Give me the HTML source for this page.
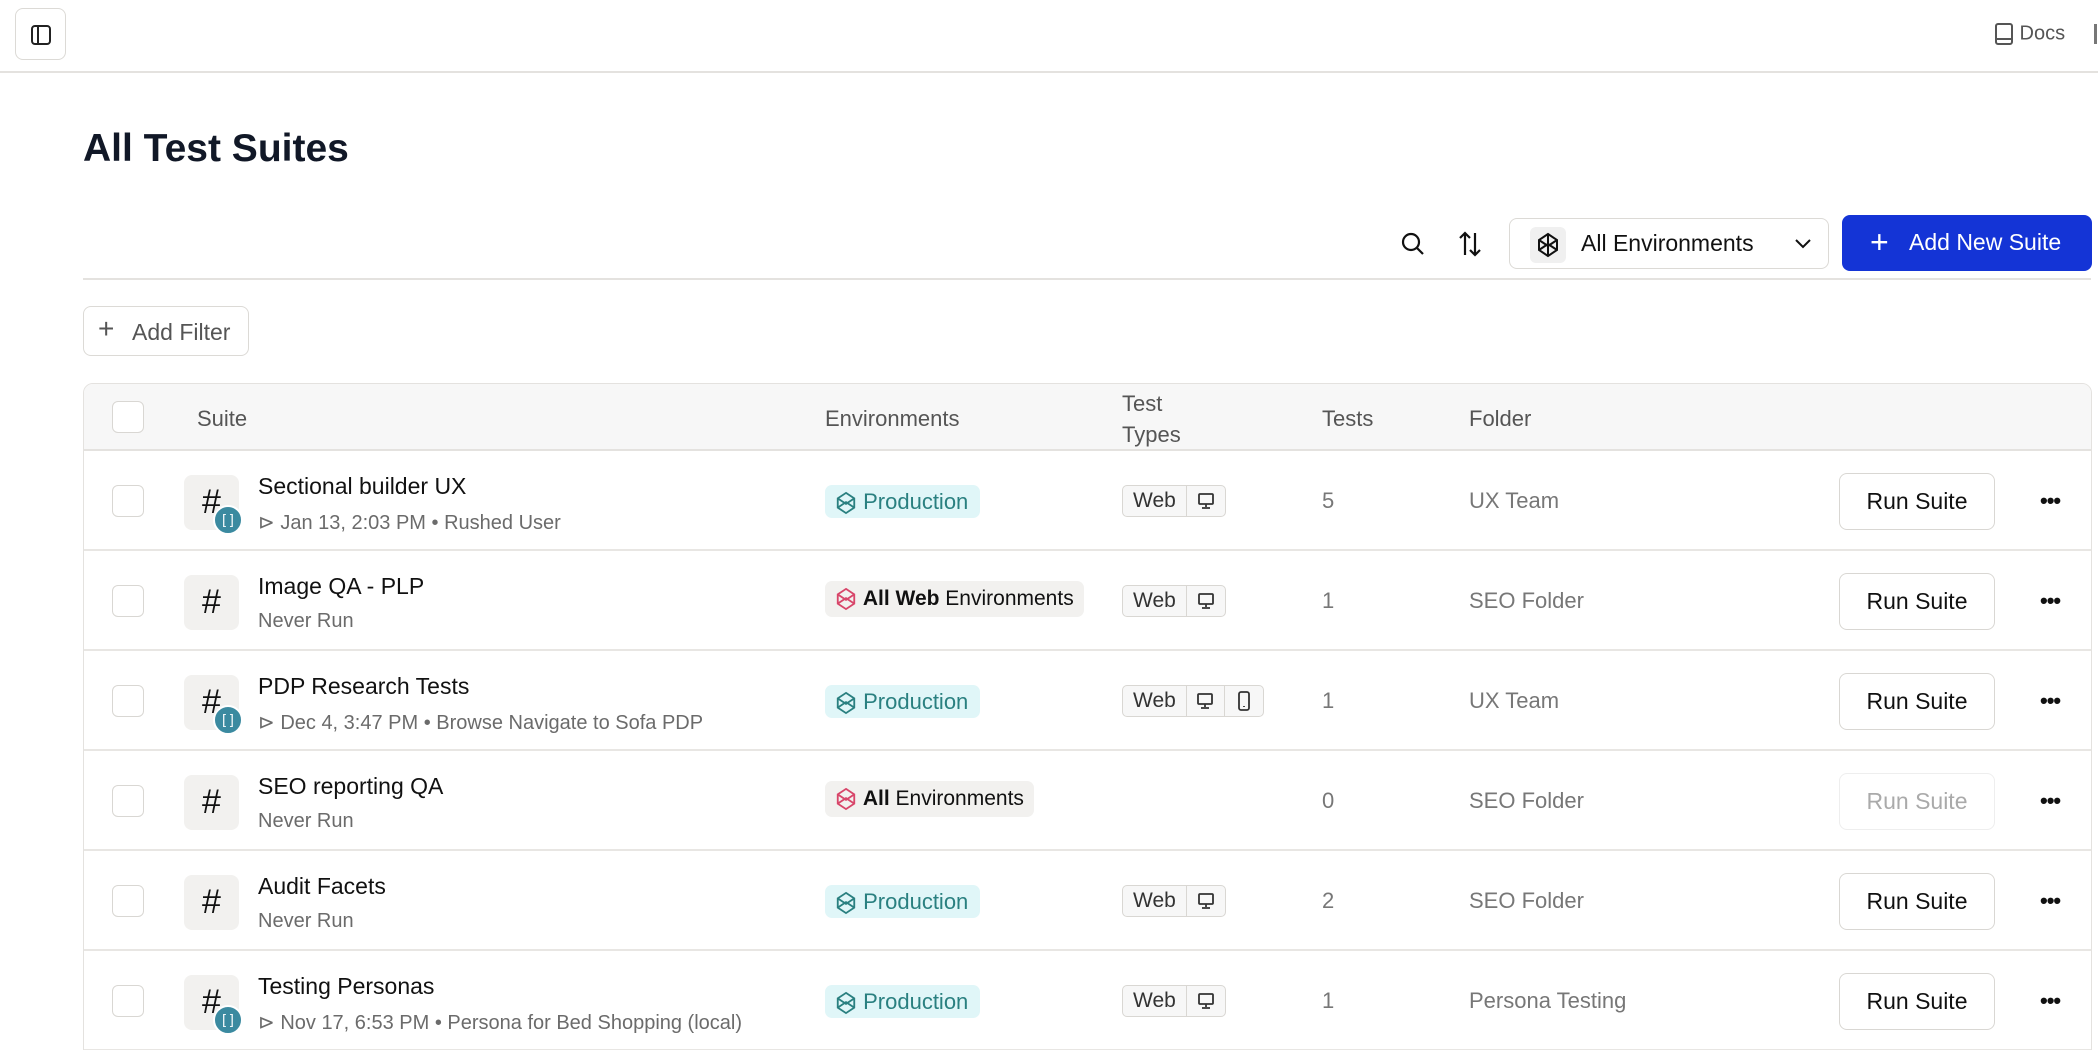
<!DOCTYPE html>
<html><head><meta charset="utf-8">
<style>
*{box-sizing:border-box;margin:0;padding:0}
html,body{width:2098px;height:1050px;overflow:hidden}
body{background:#fff;font-family:"Liberation Sans",sans-serif;color:#111}
#w{position:relative;width:2098px;height:1050px;overflow:hidden}
.a{position:absolute}
.topbar{left:0;top:0;width:2098px;height:73px;border-bottom:2px solid #e4e2df}
.tog{left:15px;top:8px;width:51px;height:52px;border:1.5px solid #dcdad6;border-radius:8px}
.title{left:83px;top:127px;font-size:39px;font-weight:bold;color:#111827}
.line{left:83px;top:278px;width:2008px;height:2px;background:#e4e2df}
.env{left:1509px;top:218px;width:320px;height:51px;border:1.5px solid #dcdad6;border-radius:8px}
.add{left:1842px;top:215px;width:250px;height:56px;background:#1434d6;border-radius:8px;color:#fff;font-size:23px}
.filter{left:83px;top:306px;width:166px;height:50px;border:1.5px solid #dcdad6;border-radius:8px;font-size:23px;color:#555}
.table{left:83px;top:383px;width:2009px;height:700px;border:1.5px solid #e4e2df;border-radius:10px;overflow:hidden}
.head{left:0;top:0;width:100%;height:67px;background:#f7f7f7;border-bottom:2px solid #e4e2df}
.ht{font-size:22px;color:#555}
.cb{width:32px;height:32px;border:1.5px solid #d9d7d3;border-radius:6px;background:#fff}
.row{left:0;width:100%;height:100px;border-bottom:2px solid #e8e6e3}
.ic{left:100px;top:24px;width:55px;height:55px;background:#f2f1ef;border-radius:8px;font-size:34px;text-align:center;line-height:55px;color:#111}
.bd{left:129px;top:54px;width:30px;height:30px;border-radius:50%;background:#3b8aa0;border:2px solid #fff;color:#fff;font-size:14px;text-align:center;line-height:25px}
.nm{left:174px;top:22px;font-size:23px;color:#111}
.sub{left:174px;top:59px;font-size:20px;color:#6b6b6b;white-space:nowrap}
.prod{left:741px;top:34px;height:33px;padding:0 12px 0 10px;background:#e0f6f8;border-radius:7px;font-size:22px;color:#2a8080;line-height:33px;white-space:nowrap}
.allenv{left:741px;top:30px;height:36px;padding:0 10px;background:#f2f1ef;border-radius:7px;font-size:21px;color:#111;line-height:36px;white-space:nowrap}
.tt{left:1038px;top:34px;height:32px;border:1.5px solid #d9d7d3;border-radius:5px;background:#f7f7f7;display:flex;font-size:21px;color:#333}
.tt span{padding:0 10px;line-height:29px;border-right:1.5px solid #d9d7d3}
.tt i{width:38px;display:flex;align-items:center;justify-content:center;border-right:1.5px solid #d9d7d3}
.tt i:last-child{border-right:none}
.num{left:1238px;top:37px;font-size:22px;color:#777}
.fold{left:1385px;top:37px;font-size:22px;color:#777}
.run{left:1755px;top:22px;width:156px;height:57px;border:1.5px solid #d9d7d3;border-radius:8px;font-size:23px;text-align:center;line-height:55px;color:#111}
.dots{left:1956px;top:37px;font-size:22px;font-weight:bold;letter-spacing:-1px;color:#111}
svg{display:inline-block;vertical-align:middle}
</style></head><body><div id="w">
<div class="a topbar"></div>
<div class="a tog"><svg class="a" style="left:14px;top:15px" width="22" height="22" viewBox="0 0 22 22" fill="none" stroke="#222" stroke-width="2"><rect x="2" y="2" width="18" height="18" rx="3"/><line x1="8" y1="2" x2="8" y2="20"/></svg></div>
<div class="a" style="left:1994px;top:22px;font-size:20px;color:#555"><svg width="20" height="24" viewBox="0 0 20 24" fill="none" stroke="#555" stroke-width="2"><rect x="2" y="2" width="16" height="20" rx="2"/><line x1="2" y1="17" x2="18" y2="17"/></svg> Docs</div>
<div class="a" style="left:2094px;top:24px;width:3px;height:20px;background:#777"></div>
<div class="a title">All Test Suites</div>

<svg class="a" style="left:1400px;top:231px" width="26" height="26" viewBox="0 0 26 26" fill="none" stroke="#111" stroke-width="2.2"><circle cx="11" cy="11" r="8"/><line x1="17" y1="17" x2="23" y2="23"/></svg>
<svg class="a" style="left:1457px;top:230px" width="26" height="28" viewBox="0 0 26 28" fill="none" stroke="#111" stroke-width="2.2"><path d="M8 25V3M3 8l5-5 5 5M18 3v22M13 20l5 5 5-5"/></svg>
<div class="a env">
 <div class="a" style="left:20px;top:8px;width:36px;height:36px;background:#f0f0f0;border-radius:6px"></div>
 <svg class="a" style="left:26px;top:13px" width="24" height="26" viewBox="0 0 24 26" fill="none" stroke="#111" stroke-width="2"><path d="M12 2l9 6v10l-9 6-9-6V8z M3 8l9 6 9-6 M3 18l9-6 9 6 M12 2v22"/></svg>
 <div class="a" style="left:71px;top:11px;font-size:23px;color:#111">All Environments</div>
 <svg class="a" style="left:284px;top:19px" width="18" height="12" viewBox="0 0 18 12" fill="none" stroke="#111" stroke-width="2"><path d="M2 2l7 7 7-7"/></svg>
</div>
<div class="a add"><span class="a" style="left:28px;top:9px;font-size:32px;font-weight:300">+</span><span class="a" style="left:67px;top:14px">Add New Suite</span></div>
<div class="a line"></div>
<div class="a filter"><span class="a" style="left:14px;top:6px;font-size:28px;font-weight:300">+</span><span class="a" style="left:48px;top:12px">Add Filter</span></div>

<div class="a table">
 <div class="a head">
  <div class="a cb" style="left:28px;top:17px"></div>
  <div class="a ht" style="left:113px;top:22px">Suite</div>
  <div class="a ht" style="left:741px;top:22px">Environments</div>
  <div class="a ht" style="left:1038px;top:4px;line-height:31px">Test<br>Types</div>
  <div class="a ht" style="left:1238px;top:22px">Tests</div>
  <div class="a ht" style="left:1385px;top:22px">Folder</div>
 </div>
 <div class="a row" style="top:67px">
  <div class="a cb" style="left:28px;top:34px"></div>
  <div class="a ic">#</div><div class="a bd">[ ]</div>
  <div class="a nm">Sectional builder UX</div>
  <div class="a sub">⊳ Jan 13, 2:03 PM • Rushed User</div>
  <div class="a prod"><svg width="22" height="24" viewBox="0 0 24 26" fill="none" stroke="#2a8080" stroke-width="2"><path d="M12 2l9 6v10l-9 6-9-6V8z M3 8l9 6 9-6 M3 18l9-6 9 6"/></svg> Production</div>
  <div class="a tt"><span>Web</span><i><svg width="18" height="18" viewBox="0 0 18 18" fill="none" stroke="#333" stroke-width="1.8"><rect x="2" y="2" width="14" height="10" rx="1"/><path d="M9 12v3M5 16h8"/></svg></i></div>
  <div class="a num">5</div><div class="a fold">UX Team</div>
  <div class="a run">Run Suite</div><div class="a dots">•••</div>
 </div>
 <div class="a row" style="top:167px">
  <div class="a cb" style="left:28px;top:34px"></div>
  <div class="a ic">#</div>
  <div class="a nm">Image QA - PLP</div>
  <div class="a sub">Never Run</div>
  <div class="a allenv"><svg width="22" height="24" viewBox="0 0 24 26" fill="none" stroke="#d8466a" stroke-width="2"><path d="M12 2l9 6v10l-9 6-9-6V8z M3 8l9 6 9-6 M3 18l9-6 9 6"/></svg> <b>All Web</b> Environments</div>
  <div class="a tt"><span>Web</span><i><svg width="18" height="18" viewBox="0 0 18 18" fill="none" stroke="#333" stroke-width="1.8"><rect x="2" y="2" width="14" height="10" rx="1"/><path d="M9 12v3M5 16h8"/></svg></i></div>
  <div class="a num">1</div><div class="a fold">SEO Folder</div>
  <div class="a run">Run Suite</div><div class="a dots">•••</div>
 </div>
 <div class="a row" style="top:267px">
  <div class="a cb" style="left:28px;top:34px"></div>
  <div class="a ic">#</div><div class="a bd">[ ]</div>
  <div class="a nm">PDP Research Tests</div>
  <div class="a sub">⊳ Dec 4, 3:47 PM • Browse Navigate to Sofa PDP</div>
  <div class="a prod"><svg width="22" height="24" viewBox="0 0 24 26" fill="none" stroke="#2a8080" stroke-width="2"><path d="M12 2l9 6v10l-9 6-9-6V8z M3 8l9 6 9-6 M3 18l9-6 9 6"/></svg> Production</div>
  <div class="a tt"><span>Web</span><i><svg width="18" height="18" viewBox="0 0 18 18" fill="none" stroke="#333" stroke-width="1.8"><rect x="2" y="2" width="14" height="10" rx="1"/><path d="M9 12v3M5 16h8"/></svg></i><i><svg width="14" height="20" viewBox="0 0 14 20" fill="none" stroke="#333" stroke-width="1.8"><rect x="2" y="1" width="10" height="18" rx="2"/><path d="M7 15v1"/></svg></i></div>
  <div class="a num">1</div><div class="a fold">UX Team</div>
  <div class="a run">Run Suite</div><div class="a dots">•••</div>
 </div>
 <div class="a row" style="top:367px">
  <div class="a cb" style="left:28px;top:34px"></div>
  <div class="a ic">#</div>
  <div class="a nm">SEO reporting QA</div>
  <div class="a sub">Never Run</div>
  <div class="a allenv"><svg width="22" height="24" viewBox="0 0 24 26" fill="none" stroke="#d8466a" stroke-width="2"><path d="M12 2l9 6v10l-9 6-9-6V8z M3 8l9 6 9-6 M3 18l9-6 9 6"/></svg> <b>All</b> Environments</div>
  <div class="a num">0</div><div class="a fold">SEO Folder</div>
  <div class="a run" style="color:#aaa;border-color:#eee">Run Suite</div><div class="a dots">•••</div>
 </div>
 <div class="a row" style="top:467px">
  <div class="a cb" style="left:28px;top:34px"></div>
  <div class="a ic">#</div>
  <div class="a nm">Audit Facets</div>
  <div class="a sub">Never Run</div>
  <div class="a prod"><svg width="22" height="24" viewBox="0 0 24 26" fill="none" stroke="#2a8080" stroke-width="2"><path d="M12 2l9 6v10l-9 6-9-6V8z M3 8l9 6 9-6 M3 18l9-6 9 6"/></svg> Production</div>
  <div class="a tt"><span>Web</span><i><svg width="18" height="18" viewBox="0 0 18 18" fill="none" stroke="#333" stroke-width="1.8"><rect x="2" y="2" width="14" height="10" rx="1"/><path d="M9 12v3M5 16h8"/></svg></i></div>
  <div class="a num">2</div><div class="a fold">SEO Folder</div>
  <div class="a run">Run Suite</div><div class="a dots">•••</div>
 </div>
 <div class="a row" style="top:567px">
  <div class="a cb" style="left:28px;top:34px"></div>
  <div class="a ic">#</div><div class="a bd">[ ]</div>
  <div class="a nm">Testing Personas</div>
  <div class="a sub">⊳ Nov 17, 6:53 PM • Persona for Bed Shopping (local)</div>
  <div class="a prod"><svg width="22" height="24" viewBox="0 0 24 26" fill="none" stroke="#2a8080" stroke-width="2"><path d="M12 2l9 6v10l-9 6-9-6V8z M3 8l9 6 9-6 M3 18l9-6 9 6"/></svg> Production</div>
  <div class="a tt"><span>Web</span><i><svg width="18" height="18" viewBox="0 0 18 18" fill="none" stroke="#333" stroke-width="1.8"><rect x="2" y="2" width="14" height="10" rx="1"/><path d="M9 12v3M5 16h8"/></svg></i></div>
  <div class="a num">1</div><div class="a fold">Persona Testing</div>
  <div class="a run">Run Suite</div><div class="a dots">•••</div>
 </div>
</div>
</div></body></html>
